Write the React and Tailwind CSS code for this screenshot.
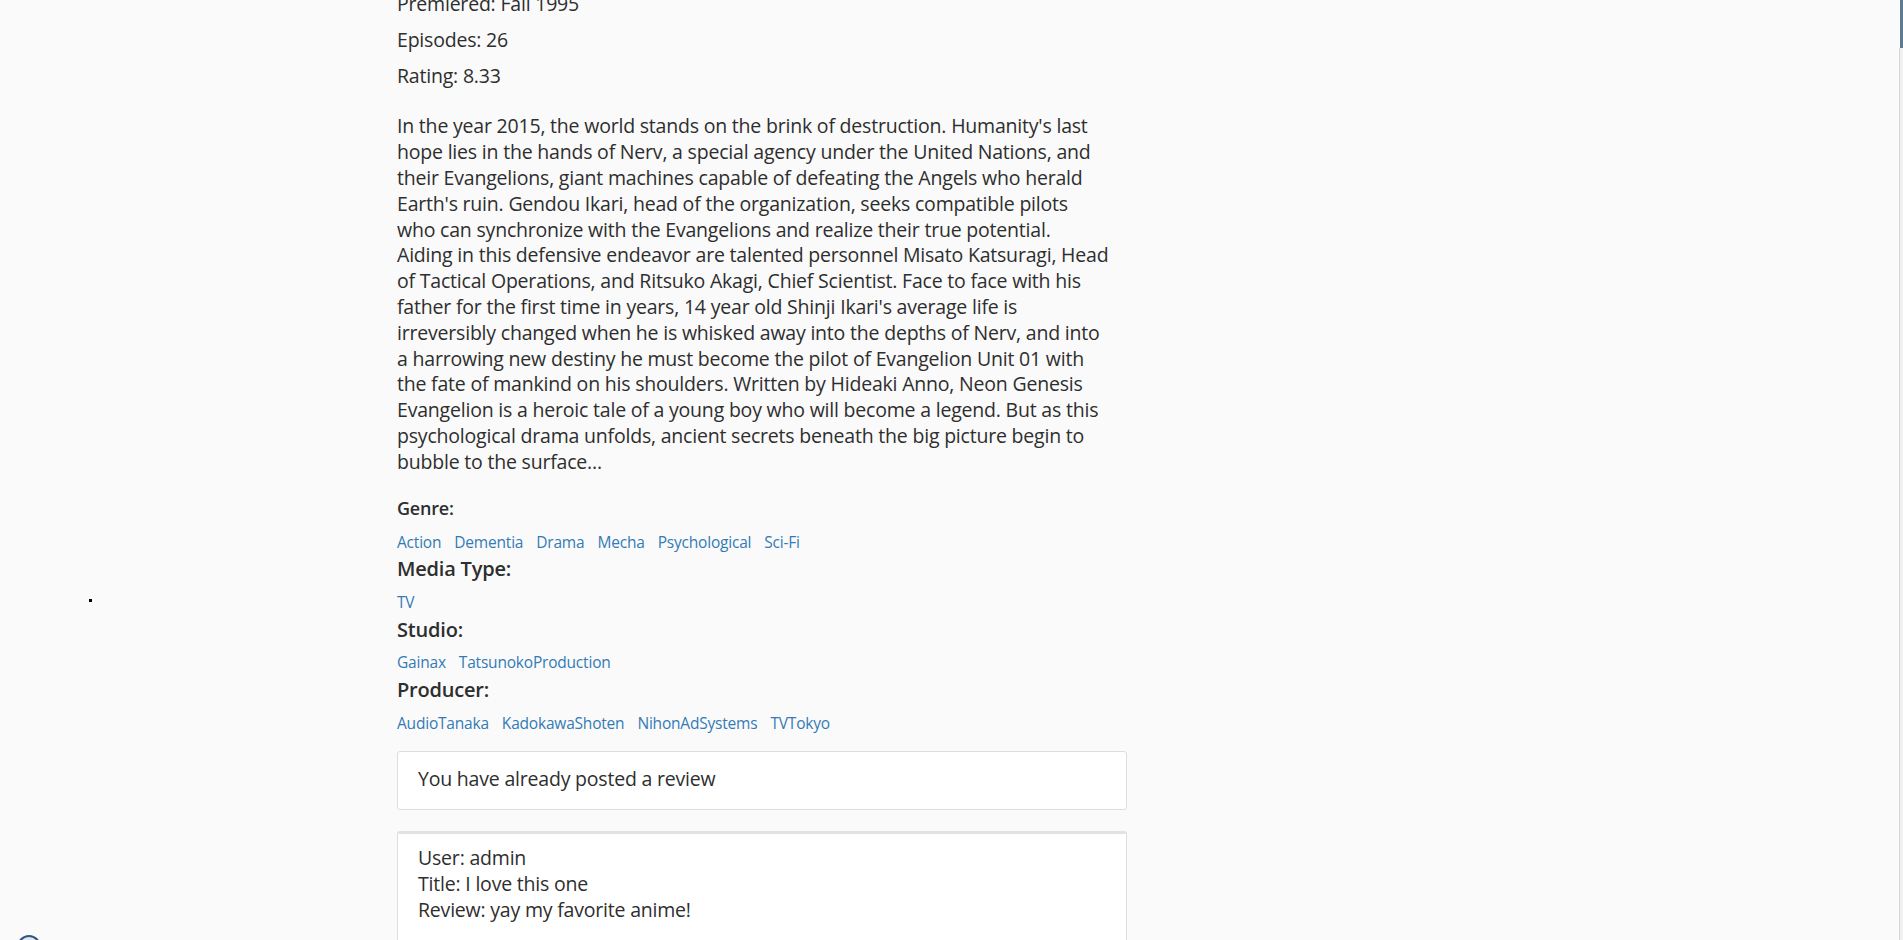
const genres = ["Action", "Dementia", "Drama", "Mecha", "Psychological", "Sci-Fi"];
const studios = ["Gainax", "TatsunokoProduction"];
const producers = ["AudioTanaka", "KadokawaShoten", "NihonAdSystems", "TVTokyo"];

// synopsis kept in the same lines as the original page wraps it
const synopsis = [
    "In the year 2015, the world stands on the brink of destruction. Humanity's last",
    "hope lies in the hands of Nerv, a special agency under the United Nations, and",
    "their Evangelions, giant machines capable of defeating the Angels who herald",
    "Earth's ruin. Gendou Ikari, head of the organization, seeks compatible pilots",
    "who can synchronize with the Evangelions and realize their true potential.",
    "Aiding in this defensive endeavor are talented personnel Misato Katsuragi, Head",
    "of Tactical Operations, and Ritsuko Akagi, Chief Scientist. Face to face with his",
    "father for the first time in years, 14 year old Shinji Ikari's average life is",
    "irreversibly changed when he is whisked away into the depths of Nerv, and into",
    "a harrowing new destiny he must become the pilot of Evangelion Unit 01 with",
    "the fate of mankind on his shoulders. Written by Hideaki Anno, Neon Genesis",
    "Evangelion is a heroic tale of a young boy who will become a legend. But as this",
    "psychological drama unfolds, ancient secrets beneath the big picture begin to",
    "bubble to the surface...",
];

function Links({items}) {
    return (
        <div className="flex gap-[13px] text-[15.5px] leading-[21px] text-[#337ab7]">
            {items.map((item) => (
                <a key={item} href="#" className="hover:underline">{item}</a>
            ))}
        </div>
    );
}

export default function App() {
    return (
        <div className="relative h-[940px] overflow-hidden bg-[#fafafa] text-[#2e2e2e] font-['Open_Sans',sans-serif]">
            <div className="pl-[397px]">
                <div className="w-[730px] text-[19.5px] leading-[25.8px] tracking-[-0.2px]">
                    <p className="-mt-[9px] mb-[10px]">Premiered: Fall 1995</p>
                    <p className="mb-[10px]">Episodes: 26</p>
                    <p className="mb-[25px]">Rating: 8.33</p>

                    <p className="mb-[23px]">
                        {synopsis.map((line) => (
                            <span key={line} className="block whitespace-nowrap">{line}</span>
                        ))}
                    </p>

                    <h4 className="text-[18px] leading-[20px] font-semibold mb-[14px]">Genre:</h4>
                    <Links items={genres}/>

                    <h3 className="mt-[5px] text-[20px] leading-[22px] font-semibold mb-[12px]">Media Type:</h3>
                    <Links items={["TV"]}/>

                    <h3 className="mt-[6px] text-[20px] leading-[22px] font-semibold mb-[11px]">Studio:</h3>
                    <Links items={studios}/>

                    <h3 className="mt-[6px] text-[20px] leading-[22px] font-semibold mb-[12px]">Producer:</h3>
                    <Links items={producers}/>

                    <div className="mt-[17px] rounded-[3px] border border-[#dddddd] bg-white pl-[20px] pt-[14px] pb-[18px]">
                        You have already posted a review
                    </div>

                    <div className="mt-[21px] rounded-[3px] border border-[#dddddd] border-t-[3px] border-t-[#e2e2e2] bg-white pl-[20px] pt-[11px] pb-[30px]">
                        <div>User: admin</div>
                        <div>Title: I love this one</div>
                        <div>Review: yay my favorite anime!</div>
                    </div>
                </div>
            </div>

            {/* stray cursor dot */}
            <div className="absolute left-[89px] top-[599px] h-[3px] w-[3px] bg-black"/>

            {/* floating button peeking at the bottom */}
            <div className="absolute left-[17px] top-[935px] h-[24px] w-[24px] rounded-full border-2 border-[#34557a] bg-[#dce8f4]"/>

            {/* scrollbar strip */}
            <div className="absolute right-0 top-0 flex h-full">
                <div className="mt-[48px] w-px bg-[#d6d6d6]"/>
                <div className="flex w-[3px] flex-col">
                    <div className="h-[48px] bg-[#5d7a92]"/>
                    <div className="flex-1 bg-[#f0f0f0]"/>
                </div>
            </div>
        </div>
    );
}
